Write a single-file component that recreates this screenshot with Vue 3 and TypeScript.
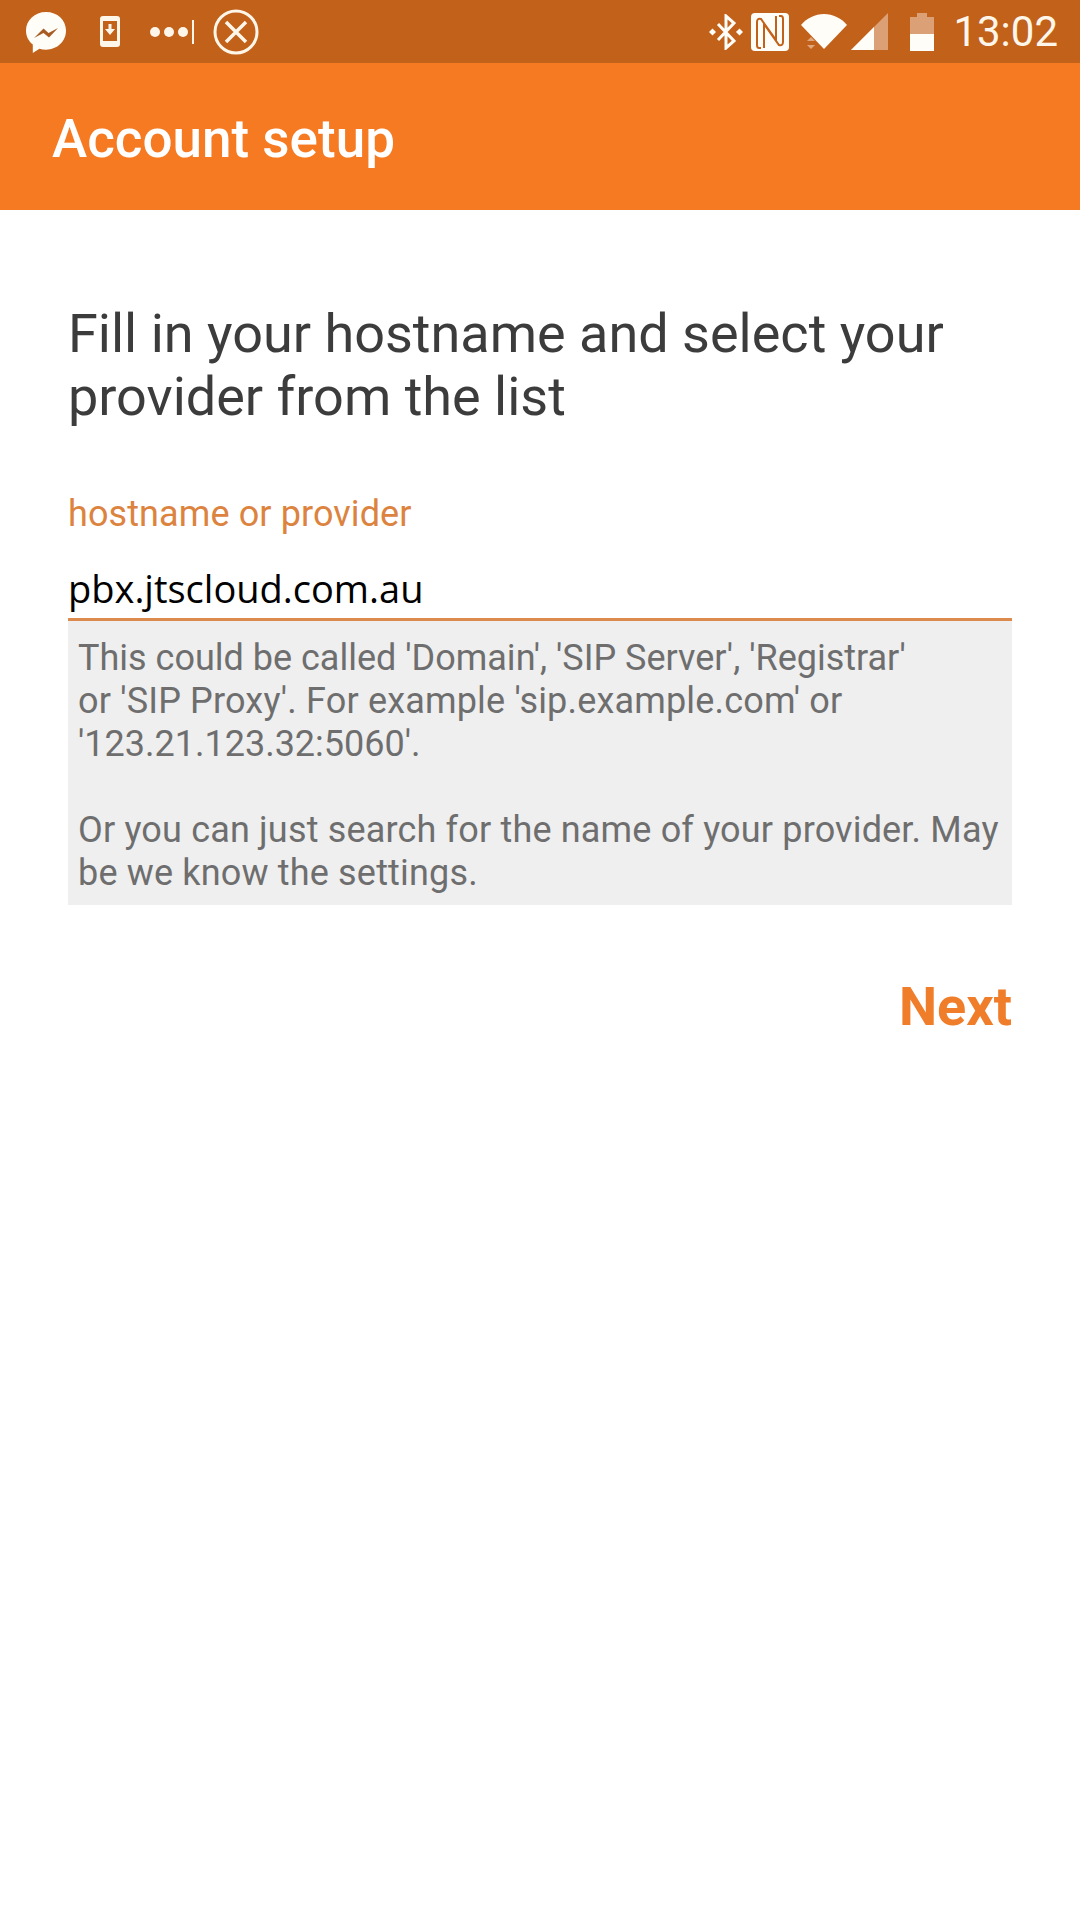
<template>
  <div class="screen">
    <div class="status-bar">
      <div class="status-left">
        <svg class="ic-messenger" viewBox="0 0 42 42" width="42" height="42">
          <path d="M21 1C9.600 1 1 9.200 1 19.600c0 5.800 2.500 10.600 6.800 14V42l6.600-4.200c2 .6 4.200.9 6.600.9 11.400 0 20-8.400 20-19.100S32.400 1 21 1z" fill="#fffdf8" />
          <path d="M9 27l9.500-9.500 5 4.500L33 17l-9 9.500-5.500-4.500z" fill="#a85c24" />
        </svg>
        <svg class="ic-phone" viewBox="0 0 20 31" width="20" height="31">
          <rect width="20" height="31" rx="3" fill="#fff6ea" />
          <rect x="3" y="5" width="14" height="20" fill="#c1611a" />
          <path d="M8.500 8h3v5H15l-5 6-5-6h3.500z" fill="#fff6ea" />
        </svg>
        <svg class="ic-dots" viewBox="0 0 44 30" width="44" height="30">
          <circle cx="5" cy="15" r="5" fill="#fff6ea" />
          <circle cx="19" cy="15" r="5" fill="#fff6ea" />
          <circle cx="33" cy="15" r="5" fill="#fff6ea" />
          <rect x="42" y="3" width="2" height="24" fill="#fff6ea" />
        </svg>
        <svg class="ic-close" viewBox="0 0 46 46" width="46" height="46">
          <circle cx="23" cy="23" r="21" fill="none" stroke="#fff6ea" stroke-width="3" />
          <path d="M13 13l20 20M33 13L13 33" fill="none" stroke="#fff6ea" stroke-width="3.500" />
        </svg>
      </div>
      <div class="status-right">
        <svg class="ic-bt" viewBox="0 0 34 36" width="34" height="36">
          <path d="M9 10l16 17-8 7V2l8 7-16 17" fill="none" stroke="#fffdf8" stroke-width="3" />
          <rect x="1" y="15.500" width="5" height="5" transform="rotate(45 3.500 18)" fill="#fffdf8" />
          <rect x="28" y="15.500" width="5" height="5" transform="rotate(45 30.500 18)" fill="#fffdf8" />
        </svg>
        <svg class="ic-nfc" viewBox="0 0 38 38" width="38" height="38">
          <rect width="38" height="38" rx="4" fill="#fffdf8" />
          <path d="M10 35H8q-2 0-2-3V9q0-4 4-3l15 21V3M28 3h2q2 0 2 3v23q0 4-4 3L13 11v24" fill="none" stroke="#c1611a" stroke-width="2" />
        </svg>
        <div class="wifi-wrap">
          <svg class="ic-wifi" viewBox="0 0 46 35" width="46" height="35">
            <path d="M0 11C6 4 14 0 23 0s17 4 23 11L23 35z" fill="#fffdf8" />
          </svg>
          <svg class="ic-updown" viewBox="0 0 8 12" width="8" height="12">
            <path d="M4 0l4 4H0zM0 8h8l-4 4z" fill="#e0a77c" />
          </svg>
        </div>
        <svg class="ic-signal" viewBox="0 0 37 37" width="37" height="37">
          <path d="M0 37L37 0v37z" fill="#dca077" />
          <path d="M0 37L23 14v23z" fill="#fffdf8" />
        </svg>
        <svg class="ic-battery" viewBox="0 0 24 38" width="24" height="38">
          <path d="M0 4h7V0h10v4h7v34H0z" fill="#dca077" />
          <rect y="21" width="24" height="17" fill="#fffdf8" />
        </svg>
        <span class="clock">13:02</span>
      </div>
    </div>
    <div class="toolbar">Account setup</div>
    <div class="content">
      <h1 class="heading">Fill in your hostname and select your provider from the list</h1>
      <div class="label">hostname or provider</div>
      <div class="input">pbx.jtscloud.com.au</div>
      <div class="help">
        <p>This could be called 'Domain', 'SIP Server', 'Registrar'<br /><span class="wide">or 'SIP Proxy'. For example 'sip.example.com' or</span><br />'123.21.123.32:5060'.</p>
        <p class="wide">Or you can just search for the name of your provider. May be we know the settings.</p>
      </div>
      <div class="actions"><span class="next">Next</span></div>
    </div>
  </div>
</template>

<script setup lang="ts">
</script>

<style>
html, body { margin: 0; background: #fff; }
</style>

<style scoped>
.screen { width: 1080px; height: 1920px; background: #fff; font-family: Roboto, "Liberation Sans", sans-serif; overflow: hidden; }
.status-bar { height: 63px; background: #c1611a; display: flex; justify-content: space-between; align-items: center; }
.status-left { display: flex; align-items: center; padding-left: 25px; }
.ic-phone { margin-left: 33px; }
.ic-dots { margin-left: 30px; }
.ic-close { margin-left: 19px; }
.status-right { display: flex; align-items: center; padding-right: 22px; }
.ic-nfc { margin-left: 8px; }
.wifi-wrap { position: relative; margin-left: 12px; height: 35px; }
.ic-wifi { display: block; }
.ic-updown { position: absolute; left: 6px; top: 23px; }
.ic-signal { margin-left: 4px; }
.ic-battery { margin-left: 22px; }
.clock { margin-left: 19px; font-size: 42px; color: #fff6ea; }
.toolbar { height: 147px; background: #f67a22; color: #fff; font-size: 53px; font-weight: 500; line-height: 152px; padding-left: 52px; }
.content { padding: 92px 68px 0; }
.heading { margin: 0; font-size: 54px; font-weight: 400; line-height: 63px; color: #3c3c3c; }
.label { margin-top: 64px; font-size: 36px; line-height: 44px; letter-spacing: .1px; color: #dc843f; }
.input { margin-top: 28px; font-family: "Open Sans", sans-serif; font-size: 38px; line-height: 48px; color: #000; border-bottom: 3px solid #dc8a4e; padding-bottom: 6px; }
.help { background: #efefef; padding: 16px 10px 10px; font-size: 36px; line-height: 43px; color: #6e6e6e; }
.help p { margin: 0; }
.help p + p { margin-top: 43px; }
.wide { letter-spacing: .17px; }
.actions { margin-top: 70px; display: flex; justify-content: flex-end; }
.next { font-size: 54px; font-weight: 700; line-height: 64px; color: #f07d2a; }
</style>
